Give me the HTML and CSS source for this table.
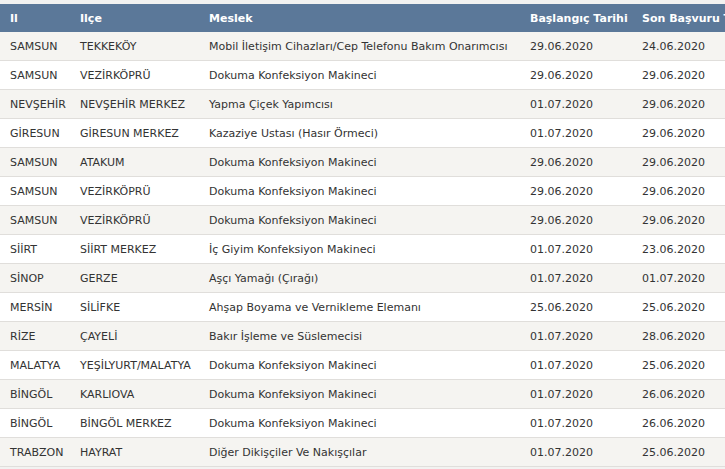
FILE: index.html
```html
<!DOCTYPE html>
<html lang="tr">
<head>
<meta charset="utf-8">
<link rel="stylesheet" href="styles.css">
</head>
<body>
<div class="wrap">
<table class="list">
<colgroup>
<col class="c1"><col class="c2"><col class="c3"><col class="c4"><col class="c5">
</colgroup>
<thead>
<tr><th>Il</th><th>Ilçe</th><th>Meslek</th><th>Başlangıç Tarihi</th><th>Son Başvuru Tarihi</th></tr>
</thead>
<tbody>
<tr><td>SAMSUN</td><td>TEKKEKÖY</td><td>Mobil İletişim Cihazları/Cep Telefonu Bakım Onarımcısı</td><td>29.06.2020</td><td>24.06.2020</td></tr>
<tr><td>SAMSUN</td><td>VEZİRKÖPRÜ</td><td>Dokuma Konfeksiyon Makineci</td><td>29.06.2020</td><td>29.06.2020</td></tr>
<tr><td>NEVŞEHİR</td><td>NEVŞEHİR MERKEZ</td><td>Yapma Çiçek Yapımcısı</td><td>01.07.2020</td><td>29.06.2020</td></tr>
<tr><td>GİRESUN</td><td>GİRESUN MERKEZ</td><td>Kazaziye Ustası (Hasır Örmeci)</td><td>01.07.2020</td><td>29.06.2020</td></tr>
<tr><td>SAMSUN</td><td>ATAKUM</td><td>Dokuma Konfeksiyon Makineci</td><td>29.06.2020</td><td>29.06.2020</td></tr>
<tr><td>SAMSUN</td><td>VEZİRKÖPRÜ</td><td>Dokuma Konfeksiyon Makineci</td><td>29.06.2020</td><td>29.06.2020</td></tr>
<tr><td>SAMSUN</td><td>VEZİRKÖPRÜ</td><td>Dokuma Konfeksiyon Makineci</td><td>29.06.2020</td><td>29.06.2020</td></tr>
<tr><td>SİİRT</td><td>SİİRT MERKEZ</td><td>İç Giyim Konfeksiyon Makineci</td><td>01.07.2020</td><td>23.06.2020</td></tr>
<tr><td>SİNOP</td><td>GERZE</td><td>Aşçı Yamağı (Çırağı)</td><td>01.07.2020</td><td>01.07.2020</td></tr>
<tr><td>MERSİN</td><td>SİLİFKE</td><td>Ahşap Boyama ve Vernikleme Elemanı</td><td>25.06.2020</td><td>25.06.2020</td></tr>
<tr><td>RİZE</td><td>ÇAYELİ</td><td>Bakır İşleme ve Süslemecisi</td><td>01.07.2020</td><td>28.06.2020</td></tr>
<tr><td>MALATYA</td><td>YEŞİLYURT/MALATYA</td><td>Dokuma Konfeksiyon Makineci</td><td>01.07.2020</td><td>25.06.2020</td></tr>
<tr><td>BİNGÖL</td><td>KARLIOVA</td><td>Dokuma Konfeksiyon Makineci</td><td>01.07.2020</td><td>26.06.2020</td></tr>
<tr><td>BİNGÖL</td><td>BİNGÖL MERKEZ</td><td>Dokuma Konfeksiyon Makineci</td><td>01.07.2020</td><td>26.06.2020</td></tr>
<tr><td>TRABZON</td><td>HAYRAT</td><td>Diğer Dikişçiler Ve Nakışçılar</td><td>01.07.2020</td><td>25.06.2020</td></tr>
</tbody>
</table>
</div>
</body>
</html>
```
FILE: styles.css
```css
html, body {
  margin: 0;
  padding: 0;
  background: #f2f2f1;
  overflow: hidden;
}
.wrap {
  padding-top: 4px;
  width: 800px;
}
.list {
  border-collapse: collapse;
  table-layout: fixed;
  width: 790px;
  font-family: "DejaVu Sans", Verdana, sans-serif;
  font-size: 11px;
  color: #333;
}
.c1 { width: 70px; }
.c2 { width: 129px; }
.c3 { width: 321px; }
.c4 { width: 112px; }
.c5 { width: 158px; }
.list th {
  background: #5b7899;
  color: #fff;
  font-weight: bold;
  text-align: left;
  height: 28px;
  padding: 0 10px;
  white-space: nowrap;
}
.list td {
  height: 28px;
  padding: 0 10px;
  border-bottom: 1px solid #e0dedb;
  white-space: nowrap;
  background: #fff;
}
.list tbody tr:nth-child(odd) td {
  background: #f5f4f1;
}
```
